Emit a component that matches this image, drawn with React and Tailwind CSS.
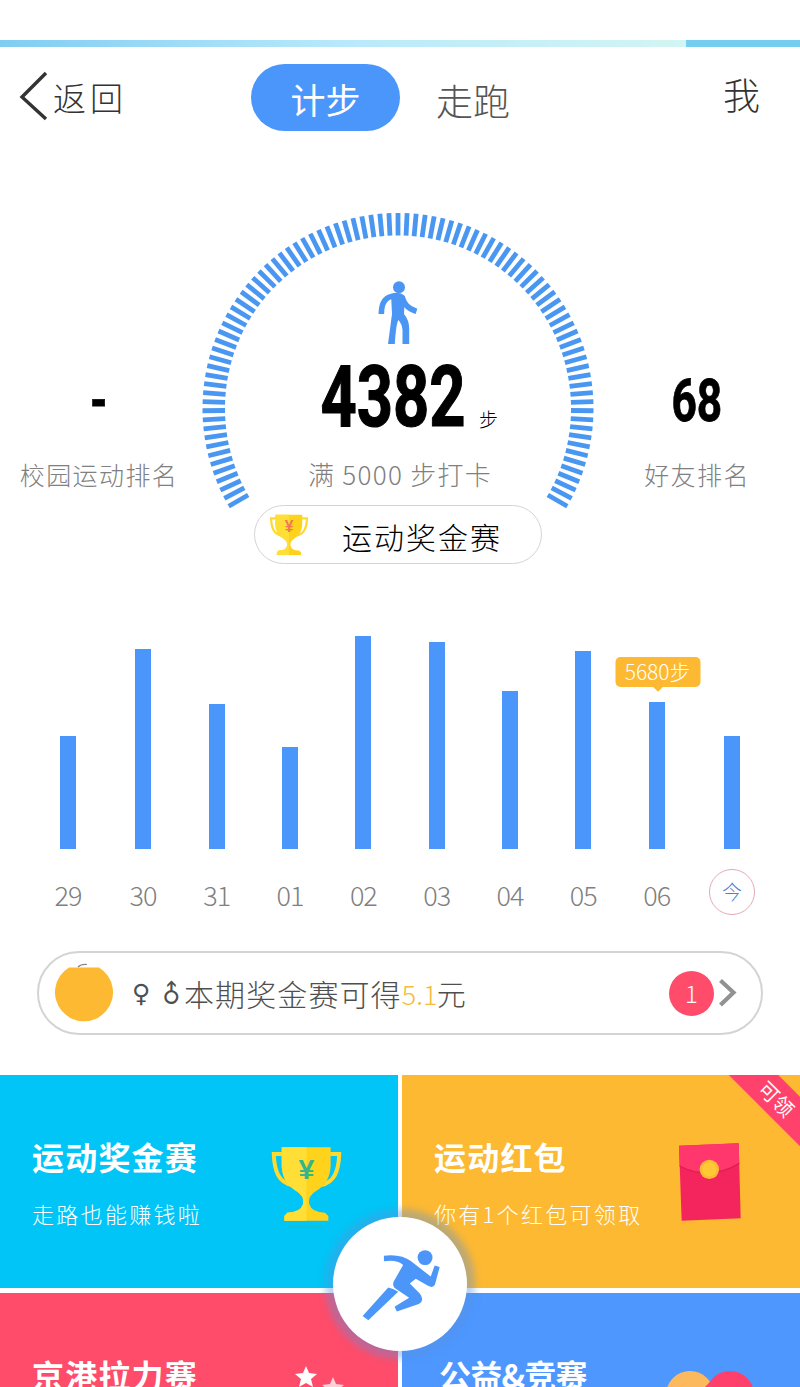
const days = [
  { label: "29", height: 113 },
  { label: "30", height: 200 },
  { label: "31", height: 145 },
  { label: "01", height: 102 },
  { label: "02", height: 213 },
  { label: "03", height: 207 },
  { label: "04", height: 158 },
  { label: "05", height: 198 },
  { label: "06", height: 147, tip: "5680步" },
  { label: "今", height: 113, today: true }
];

const ticks = Array.from({ length: 91 }, (_, index) => -120 + (index * 240) / 90);

const Trophy = ({ className, mark, shadow }) => (
  <svg viewBox="811 228 218 254" className={className}>
    <path
      d="M850 252H821C823 306 836 338 878 347M990 252H1019C1017 306 1004 338 962 347"
      fill="none"
      stroke="#ffd92e"
      strokeWidth="12"
    />
    <path
      d="M845 232H993V290Q990 340 950 363Q924 378 928 403Q936 430 976 430L986 440V454H853V440L862 430Q902 430 910 403Q914 378 888 363Q848 340 845 290Z"
      fill="#ffd21c"
    />
    <path d="M845 232H920V454H853V440L862 430Q902 430 910 403Q914 378 888 363Q848 340 845 290Z" fill="#ffdf35" />
    <text x="920" y="328" fontSize="86" fontWeight="700" textAnchor="middle" fill={mark} fontFamily="Liberation Sans">
      ¥
    </text>
    {shadow && <rect x="862" y="468" width="106" height="8" rx="4" fill={mark} opacity="0.3" />}
  </svg>
);

const Walker = () => (
  <svg viewBox="0 0 44 68" className="-ml-[4px] h-[68px] w-[44px]" fill="none" stroke="#4b96f5" strokeWidth="5.6">
    <circle cx="23" cy="9.2" r="6" fill="#4b96f5" stroke="none" />
    <path d="M5.3 36C5.3 25 9 18.5 19 18" />
    <path d="M26 19C28.5 26 31 30.5 40.5 33.4" />
    <path d="M15 16Q23 12.5 29 18L28 36Q33 42 33.2 50V66H26.5V52Q26 46 22.4 42Q20 46 18.8 66H12L16 36Z" fill="#4b96f5" stroke="none" />
  </svg>
);

const Runner = () => (
  <svg viewBox="120 140 250 220" className="h-[73px] w-[83px]" fill="#4b96f8">
    <circle cx="316" cy="169" r="22.5" />
    <path d="M192 163Q245 157 274 180L333 226L345 193L360 197L346 250Q340 262 325 254L288 233L270 247L300 277Q316 297 297 309L231 331L224 317L268 290L230 264Q215 255 222 240L250 191Q230 174 192 180Z" />
    <path d="M205 259Q219 262 235 272L145 358L128 345Z" />
  </svg>
);

const Envelope = () => (
  <svg viewBox="834 216 192 240" className="h-[80px] w-[64px]">
    <path d="M837 227L1016 220L1022 445L845 452Z" fill="#f4245c" />
    <path d="M837 227L1016 220L1018 280Q928 334 839 288Z" fill="#ff376d" />
    <path d="M839 288Q928 334 1018 280" fill="none" stroke="#dd1e55" strokeWidth="4" />
    <circle cx="928" cy="298" r="29" fill="#fdbb35" />
    <circle cx="928" cy="298" r="21" fill="#ffc936" />
  </svg>
);

const Rank = ({ value, label }) => (
  <div className="flex flex-col items-center">
    <div className="flex h-[62px] items-center font-[Roboto] text-[59px] leading-none font-bold text-black [-webkit-text-stroke:0.8px_black]">
      <span className="scale-x-[0.75]">{value}</span>
    </div>
    <p className="mt-[28px] text-[25px] leading-[30px] tracking-[1.4px] whitespace-nowrap text-[#808080]">{label}</p>
  </div>
);

const Gauge = () => (
  <div className="grid">
    <svg viewBox="0 0 400 300" className="col-start-1 row-start-1 h-[300px] w-[400px]">
      {ticks.map((angle) => (
        <line
          key={angle}
          x1="198"
          x2="198"
          y1="3"
          y2="25.5"
          stroke="#4a97f2"
          strokeWidth="4.8"
          transform={`rotate(${angle} 198 198.5)`}
        />
      ))}
    </svg>
    <div className="col-start-1 row-start-1 flex flex-col items-center pt-[68px]">
      <Walker />
      <div className="mt-[7px] flex h-[88px] w-full items-center pl-[94px] font-[Roboto] text-[86px] leading-none font-bold text-black">
        <span className="block w-[200px] origin-center scale-x-[0.735] [-webkit-text-stroke:1.2px_black]">4382</span>
        <span className="mt-[42px] -ml-[15px] font-['Noto_Sans_CJK_SC'] text-[19px] font-light">步</span>
      </div>
      <p className="mt-[18px] text-[26px] leading-[30px] tracking-[1.3px] whitespace-pre text-[#808080]">满 5000 步打卡</p>
    </div>
  </div>
);

const Chart = () => (
  <section className="grid grid-cols-[76px_74px_repeat(7,73.33px)_77.4px] pl-[30px]">
    {days.map((day) => (
      <div key={day.label} className="flex flex-col items-center">
        <div className="flex h-[226px] items-end">
          <div className="relative w-[16px] bg-[#4b96fb]" style={{ height: day.height }}>
            {day.tip && (
              <div className="absolute bottom-full left-1/2 mb-[15px] ml-[1px] flex h-[30px] w-[85px] -translate-x-1/2 items-center justify-center rounded-[5px] bg-[#fdb932] text-[21px] font-light text-white">
                {day.tip}
                <div className="absolute top-[24px] left-[38px] size-[9px] rotate-45 bg-[#fdb932]" />
              </div>
            )}
          </div>
        </div>
        {day.today ? (
          <div className="mt-[20px] flex size-[46px] items-center justify-center rounded-full border border-[#e5a9b6] text-[20px] text-[#3f86d8]">
            {day.label}
          </div>
        ) : (
          <span className="mt-[31px] text-[27px] leading-[30px] tracking-[-1px] text-[#808080]">{day.label}</span>
        )}
      </div>
    ))}
  </section>
);

const Card = ({ className, titleClassName = "tracking-[1.2px]", title, subtitle, children }) => (
  <div className={`relative flex overflow-hidden pt-[61px] text-white ${className}`}>
    <div>
      <h2 className={`text-[32px] leading-[40px] font-bold whitespace-nowrap ${titleClassName}`}>{title}</h2>
      <p className="mt-[22px] text-[22px] leading-[30px] tracking-[2.3px] whitespace-nowrap">{subtitle}</p>
    </div>
    {children}
  </div>
);

export default function App() {
  return (
    <main className="relative h-[1387px] w-[800px] overflow-hidden bg-white font-['Noto_Sans_CJK_SC',sans-serif] font-light">
      <div className="flex h-[47px] items-end">
        <div className="h-[7px] w-[686px] bg-linear-to-r from-[#80cdf2] via-[#b8e9fb] to-[#d3f5f3]" />
        <div className="h-[7px] flex-1 bg-[#75ceef]" />
      </div>

      <header className="flex h-[101px] items-center text-[#333]">
        <div className="flex w-[251px] items-center pl-[19px]">
          <svg viewBox="0 0 30 50" className="-mt-[4px] h-[50px] w-[30px]" fill="none" stroke="#333" strokeWidth="3.4">
            <path d="M27 2L3 26L27 48" />
          </svg>
          <span className="ml-[4px] text-[33px] leading-none tracking-[4px]">返回</span>
        </div>
        <div className="flex h-[67px] w-[149px] items-center justify-center rounded-full bg-[#4b96fb] pt-[4px] text-[35px] font-normal text-white">
          计步
        </div>
        <span className="mt-[6px] ml-[36px] text-[37px] leading-none text-[#555]">走跑</span>
        <span className="-mt-[7px] mr-[40px] ml-auto text-[37px] leading-none">我</span>
      </header>

      <section className="flex h-[357px] pt-[62px]">
        <div className="w-[198px] pt-[159px]">
          <Rank value="-" label="校园运动排名" />
        </div>
        <div className="w-[400px] pl-[2px]">
          <Gauge />
        </div>
        <div className="w-[198px] pt-[159px]">
          <Rank value="68" label="好友排名" />
        </div>
      </section>

      <button className="ml-[254px] flex h-[59px] w-[288px] items-center rounded-full border border-[#d4d4d4] bg-white pl-[14px]">
        <Trophy className="mt-[4px] h-[46px] w-[40px]" mark="#ef7856" />
        <span className="mt-[3px] ml-[33px] text-[30px] leading-none tracking-[2px] text-black">运动奖金赛</span>
      </button>

      <div className="h-[351px] pt-[59px]">
        <Chart />
      </div>

      <div className="mt-[36px] ml-[37px] flex h-[84px] w-[726px] items-center rounded-full border-2 border-[#d4d4d4] pl-[16px]">
        <svg viewBox="0 0 58 60" className="h-[60px] w-[58px]">
          <path d="M14 4.5A29 29 0 1 0 44 4.5Z" fill="#fdb932" />
          <path d="M23 4Q26 1 32 1.5" fill="none" stroke="#888" strokeWidth="1.2" />
        </svg>
        <div className="ml-[19px] flex items-center text-[30px] leading-none whitespace-nowrap text-[#4f4f4f]">
          <span className="flex w-[28px] font-['DejaVu_Sans'] text-[25px] font-normal">♀</span>
          <span className="flex w-[24px] -rotate-45 font-['DejaVu_Sans'] text-[25px] font-normal">♂</span>
          <span className="tracking-[1.1px]">本期奖金赛可得</span>
          <span className="w-[35px] text-[27px] text-[#f5bb3c]">5.1</span>
          <span className="text-[29px]">元</span>
        </div>
        <span className="ml-auto flex size-[45px] items-center justify-center rounded-full bg-[#ff4c6a] text-[24px] text-white">
          1
        </span>
        <svg
          viewBox="0 0 20 30"
          className="mr-[23px] ml-[4px] h-[30px] w-[20px]"
          fill="none"
          stroke="#929292"
          strokeWidth="4.2"
        >
          <path d="M2.5 2.5L15.5 14.5L2.5 27" />
        </svg>
      </div>

      <section className="mt-[40px] grid grid-cols-[398px_398px] grid-rows-[213px_213px] gap-x-[4px] gap-y-[5px]">
        <Card className="bg-[#00c5f6] pl-[32px]" title="运动奖金赛" subtitle="走路也能赚钱啦">
          <Trophy className="mt-[10px] mr-[55px] ml-auto h-[84px] w-[73px]" mark="#35b58a" shadow />
        </Card>
        <Card className="bg-[#fdb932] pl-[32px]" title="运动红包" subtitle="你有1个红包可领取">
          <div className="mt-[6px] mr-[58px] ml-auto">
            <Envelope />
          </div>
          <div className="absolute top-[6px] left-[305px] flex h-[35px] w-[140px] rotate-45 items-center justify-center bg-[#ff426c] text-[20px] leading-none font-normal">
            可领
          </div>
        </Card>
        <Card className="bg-[#ff4c6a] pl-[32px]" title="京港拉力赛">
          <svg viewBox="290 1360 70 60" className="mt-[6px] mr-[38px] ml-auto h-[60px] w-[70px]" fill="#fff">
            <path d="M306 1366L309 1373L317 1374L311 1379L313 1387L306 1383L299 1387L301 1379L295 1374L303 1373Z" />
            <path opacity="0.75" d="M333 1377L336 1384L344 1385L338 1390L340 1398L333 1394L326 1398L328 1390L322 1385L330 1384Z" />
          </svg>
        </Card>
        <Card className="bg-[#4d97ff] pl-[37px]" titleClassName="tracking-[-0.8px]" title="公益&竞赛">
          <svg viewBox="660 1365 96 60" className="mt-[11px] mr-[44px] ml-auto h-[60px] w-[96px]">
            <circle cx="690" cy="1395" r="24" fill="#fdb95d" />
            <circle cx="730" cy="1395" r="24" fill="#ff3f6c" />
            <path d="M712 1380L690 1402H730Z" fill="#ff3f6c" />
          </svg>
        </Card>
      </section>

      <button className="absolute top-[1217px] left-[333px] flex size-[134px] items-center justify-center rounded-full bg-white pl-[3px] shadow-[0_0_7px_8px_rgba(90,145,220,0.4)]">
        <Runner />
      </button>
    </main>
  );
}
